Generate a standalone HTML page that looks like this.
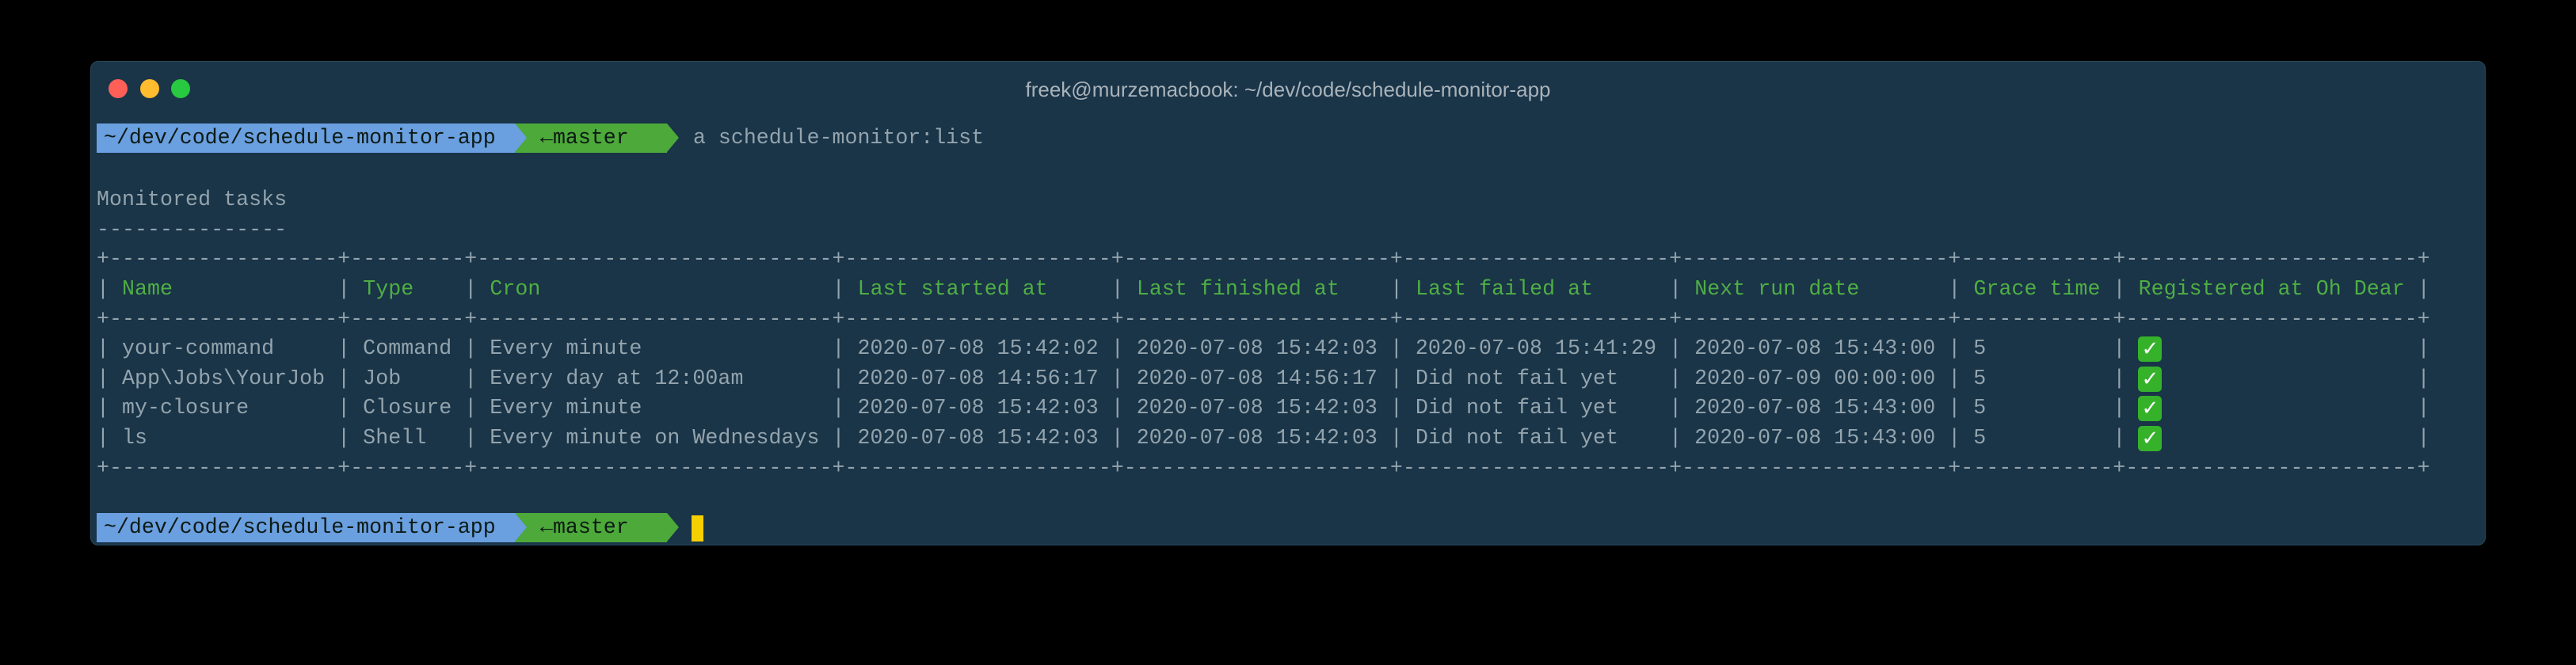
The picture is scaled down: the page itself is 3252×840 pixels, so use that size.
<!DOCTYPE html>
<html><head><meta charset="utf-8"><style>
body{margin:0;width:3252px;height:840px;background:#000;position:relative;overflow:hidden}
.win{position:absolute;left:114px;top:77px;width:3024px;height:612px;background:#1a3448;border-radius:10px;border:1px solid #2a4658;box-sizing:border-box}
.dot{position:absolute;top:100px;width:24px;height:24px;border-radius:50%}
.title{position:absolute;left:0;width:3252px;top:98px;text-align:center;font:26px "Liberation Sans",sans-serif;color:#a9b3ba}
pre{position:absolute;left:122px;top:159px;margin:0;font:26.6px/37.6px "Liberation Mono",monospace;letter-spacing:0.05px;color:#93a4ad;white-space:pre}
.g{color:#4fae44}
.ok{display:inline-block;width:30px;margin-right:2px;height:32px;margin-top:3px;background:#35b22a;border-radius:5px;color:#fff;text-align:center;line-height:32px;font-size:26px;vertical-align:top;font-family:"DejaVu Sans",sans-serif}
.seg{position:absolute;height:37px;font:26.6px/37px "Liberation Mono",monospace;color:#0c1a14;white-space:nowrap;overflow:hidden}
.tip{position:absolute;width:0;height:0;border-top:18.5px solid transparent;border-bottom:18.5px solid transparent}
</style></head><body>
<div class="win"></div>
<div class="dot" style="left:137px;background:#fe5f57"></div>
<div class="dot" style="left:177px;background:#febc2e"></div>
<div class="dot" style="left:216px;background:#28c840"></div>
<div class="title">freek@murzemacbook: ~/dev/code/schedule-monitor-app</div>

<div class="seg" style="left:122px;top:156px;width:528px;background:#6a9fe0;padding-left:9px;box-sizing:border-box">~/dev/code/schedule-monitor-app</div>
<div class="seg" style="left:650px;top:156px;width:192px;background:#4ca93a;padding-left:32px;box-sizing:border-box">←master</div>
<div class="tip" style="left:650px;top:156px;border-left:15px solid #6a9fe0"></div>
<div class="tip" style="left:842px;top:156px;border-left:15px solid #4ca93a"></div>
<div class="seg" style="left:875px;top:156px;color:#93a4ad">a schedule-monitor:list</div>

<pre>


Monitored tasks
---------------
+------------------+---------+----------------------------+---------------------+---------------------+---------------------+---------------------+------------+-----------------------+
| <span class="g">Name</span>             | <span class="g">Type</span>    | <span class="g">Cron</span>                       | <span class="g">Last started at</span>     | <span class="g">Last finished at</span>    | <span class="g">Last failed at</span>      | <span class="g">Next run date</span>       | <span class="g">Grace time</span> | <span class="g">Registered at Oh Dear</span> |
+------------------+---------+----------------------------+---------------------+---------------------+---------------------+---------------------+------------+-----------------------+
| your-command     | Command | Every minute               | 2020-07-08 15:42:02 | 2020-07-08 15:42:03 | 2020-07-08 15:41:29 | 2020-07-08 15:43:00 | 5          | <span class="ok">✓</span>                    |
| App\Jobs\YourJob | Job     | Every day at 12:00am       | 2020-07-08 14:56:17 | 2020-07-08 14:56:17 | Did not fail yet    | 2020-07-09 00:00:00 | 5          | <span class="ok">✓</span>                    |
| my-closure       | Closure | Every minute               | 2020-07-08 15:42:03 | 2020-07-08 15:42:03 | Did not fail yet    | 2020-07-08 15:43:00 | 5          | <span class="ok">✓</span>                    |
| ls               | Shell   | Every minute on Wednesdays | 2020-07-08 15:42:03 | 2020-07-08 15:42:03 | Did not fail yet    | 2020-07-08 15:43:00 | 5          | <span class="ok">✓</span>                    |
+------------------+---------+----------------------------+---------------------+---------------------+---------------------+---------------------+------------+-----------------------+
</pre>

<div class="seg" style="left:122px;top:648px;width:528px;background:#6a9fe0;padding-left:9px;box-sizing:border-box">~/dev/code/schedule-monitor-app</div>
<div class="seg" style="left:650px;top:648px;width:192px;background:#4ca93a;padding-left:32px;box-sizing:border-box">←master</div>
<div class="tip" style="left:650px;top:648px;border-left:15px solid #6a9fe0"></div>
<div class="tip" style="left:842px;top:648px;border-left:15px solid #4ca93a"></div>
<div style="position:absolute;left:873px;top:651px;width:15px;height:33px;background:#f5d000"></div>
</body></html>
